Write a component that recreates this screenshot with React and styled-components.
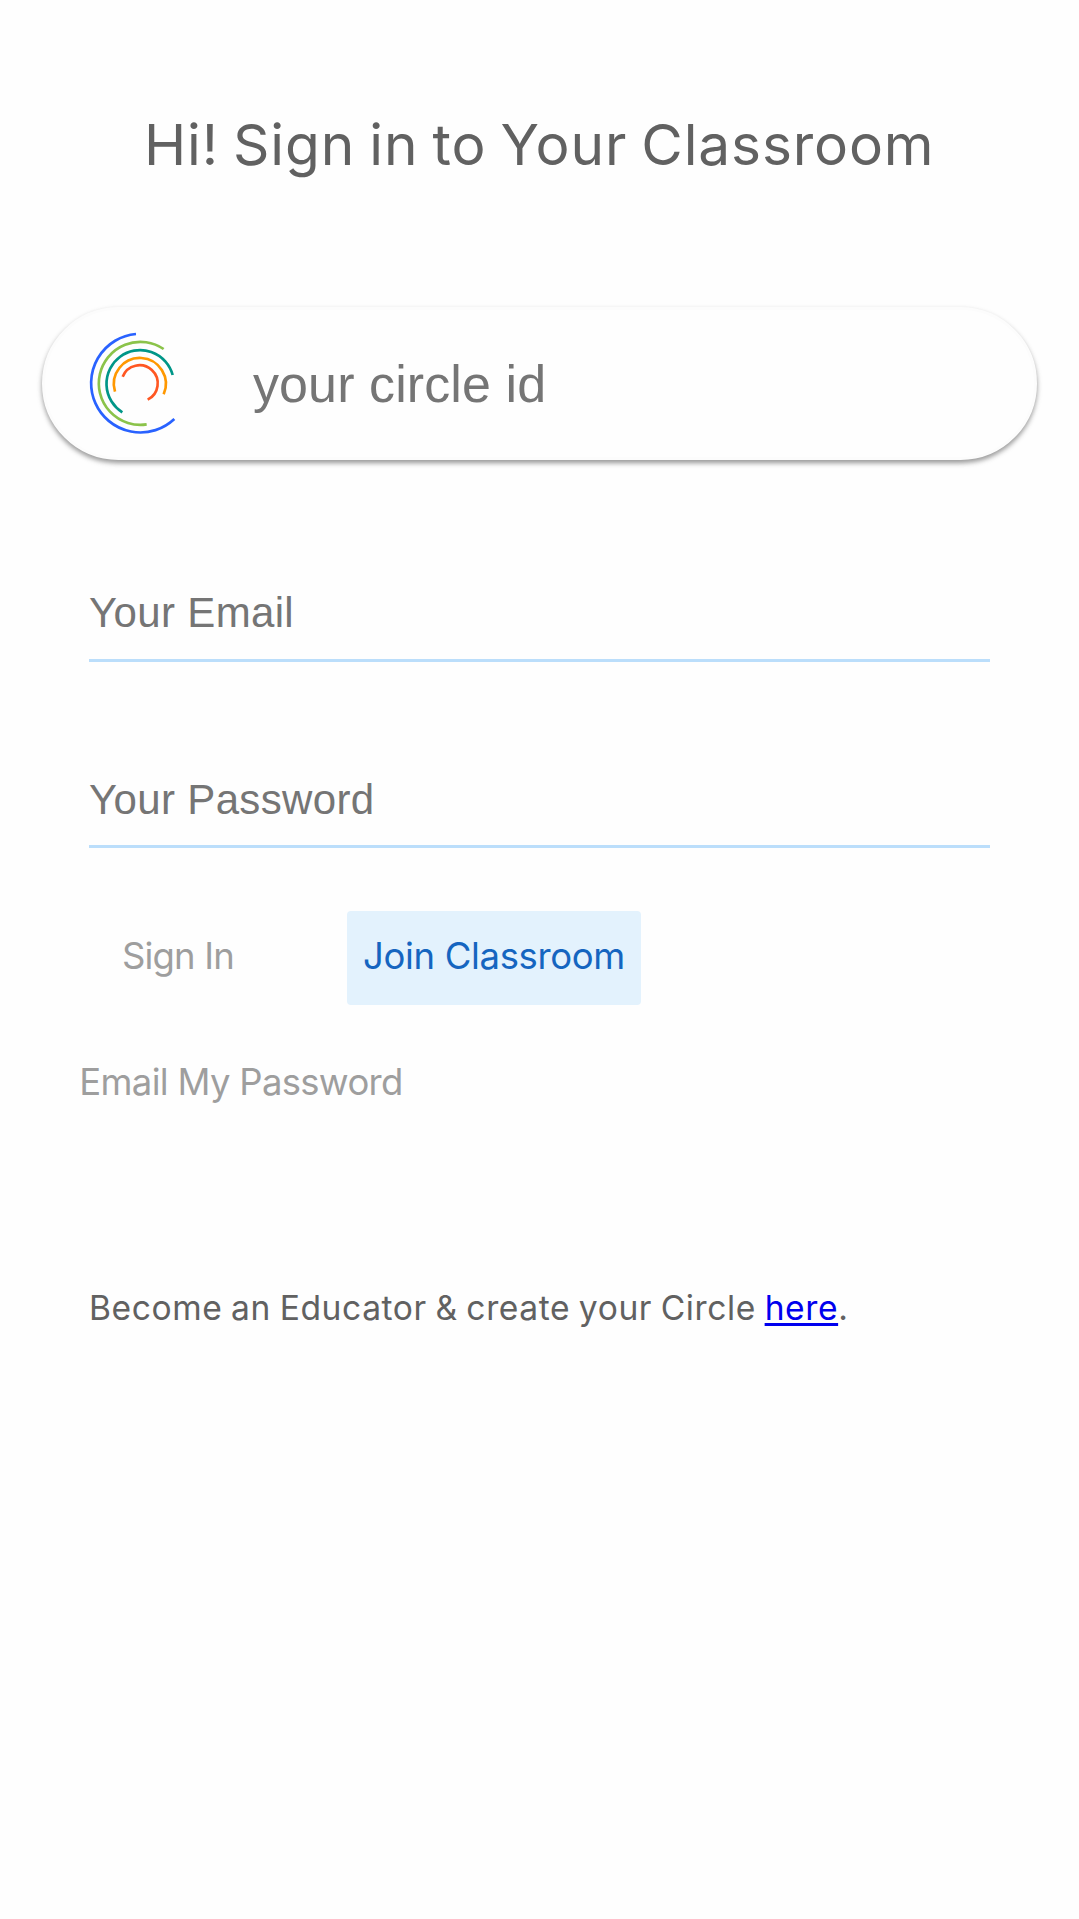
import React, { useState } from "react";
import styled, { createGlobalStyle } from "styled-components";

const GlobalStyle = createGlobalStyle`
  * {
    box-sizing: border-box;
  }
  body {
    margin: 0;
    background-color: #fefefe;
  }
`;

const Container = styled.div`
  display: flex;
  flex-direction: column;
  min-height: 1919px;
  overflow: hidden;
  color: #616161;
  font-family: Inter, sans-serif;
`;

const Title = styled.h1`
  margin: 0;
  padding-left: 144px;
  line-height: 289px;
  font-size: 56.8px;
  font-weight: 400;
  letter-spacing: 0.85px;
  word-spacing: -2.6px;
  white-space: nowrap;
`;

const CircleBox = styled.div`
  display: flex;
  align-items: center;
  height: 153px;
  margin: 18px 42px 0;
  padding-left: 25px;
  border: 3px solid #fcfcfc;
  border-radius: 77px;
  background-color: #fefefe;
  box-shadow: 0 3px 6px rgba(0, 0, 0, 0.16), 0 3px 4px rgba(0, 0, 0, 0.28);
`;

const Logo = styled.svg`
  flex: none;
  width: 130px;
  height: 130px;
  margin-bottom: 7px;
  fill: none;
  stroke-width: 8;
`;

const Input = styled.input`
  border: none;
  outline: none;
  padding: 0;
  background: transparent;
  color: #616161;
  font-family: "Liberation Sans", Arial, sans-serif;

  &::placeholder {
    color: #757575;
  }
`;

const CircleInput = styled(Input)`
  width: 700px;
  height: 120px;
  margin-left: 53px;
  font-size: 52px;
  letter-spacing: 0.1px;
`;

const Form = styled.form`
  display: flex;
  flex-direction: column;
  margin: 106px 89px 0;
  gap: 90px;
`;

const Field = styled(Input)`
  height: 96px;
  padding-top: ${(props) => props.$offset || 0}px;
  border-bottom: 3px solid #bbdefb;
  font-size: 42px;
  letter-spacing: 0.35px;
`;

const Actions = styled.div`
  display: flex;
  gap: 80px;
  margin: 63px 0 0 89px;
`;

const Button = styled.button`
  width: ${(props) => props.$width}px;
  height: 94px;
  padding: 0 0 4px;
  border: none;
  border-radius: 4px;
  background-color: ${(props) => (props.$primary ? "#e3f2fd" : "transparent")};
  color: ${(props) => (props.$primary ? "#1565c0" : "#9e9e9e")};
  font-family: inherit;
  font-size: 36.5px;
  letter-spacing: ${(props) => props.$spacing || 0}px;
  white-space: nowrap;
`;

const Forgot = styled.div`
  margin: 32px 0 0 70px;
`;

const Footer = styled.p`
  margin: 147px 0 0 89px;
  line-height: 60px;
  font-size: 33.6px;
  letter-spacing: 0.6px;
  word-spacing: -1.4px;
  white-space: nowrap;
`;

const Link = styled.a`
  color: #0000ee;
  text-decoration: underline;
  text-decoration-thickness: 3px;
  text-underline-offset: 3px;
`;

const CircleLogo = () => (
  <Logo viewBox="0 0 390 390">
    <path stroke="#2962ff" d="M198 57A148 148 0 1 0 313 312" />
    <path stroke="#8bc34a" d="M281 102A124.5 124.5 0 1 0 230 328" />
    <path stroke="#009688" d="M308 180A101 101 0 1 0 157 292" />
    <path stroke="#ff9800" d="M135 230A78 78 0 1 1 281 238" />
    <path stroke="#ff5722" d="M158 185A54.5 54.5 0 1 1 233 254" />
  </Logo>
);

const App = () => {
  const [values, setValues] = useState({ circle: "", email: "", password: "" });
  const handleChange = ({ target: { name, value } }) =>
    setValues({ ...values, [name]: value });

  return (
    <Container>
      <GlobalStyle />
      <Title>Hi! Sign in to Your Classroom</Title>
      <CircleBox>
        <CircleLogo />
        <CircleInput
          name="circle"
          placeholder="your circle id"
          value={values.circle}
          onChange={handleChange}
        />
      </CircleBox>
      <Form>
        <Field
          name="email"
          placeholder="Your Email"
          value={values.email}
          onChange={handleChange}
        />
        <Field
          $offset={2}
          type="password"
          name="password"
          placeholder="Your Password"
          value={values.password}
          onChange={handleChange}
        />
      </Form>
      <Actions>
        <Button $width={178} $spacing={-0.8}>
          Sign In
        </Button>
        <Button $primary $width={294} $spacing={-0.35}>
          Join Classroom
        </Button>
      </Actions>
      <Forgot>
        <Button $width={342} $spacing={-0.7}>
          Email My Password
        </Button>
      </Forgot>
      <Footer>
        Become an Educator &amp; create your Circle <Link href="#">here</Link>.
      </Footer>
    </Container>
  );
};

export default App;
